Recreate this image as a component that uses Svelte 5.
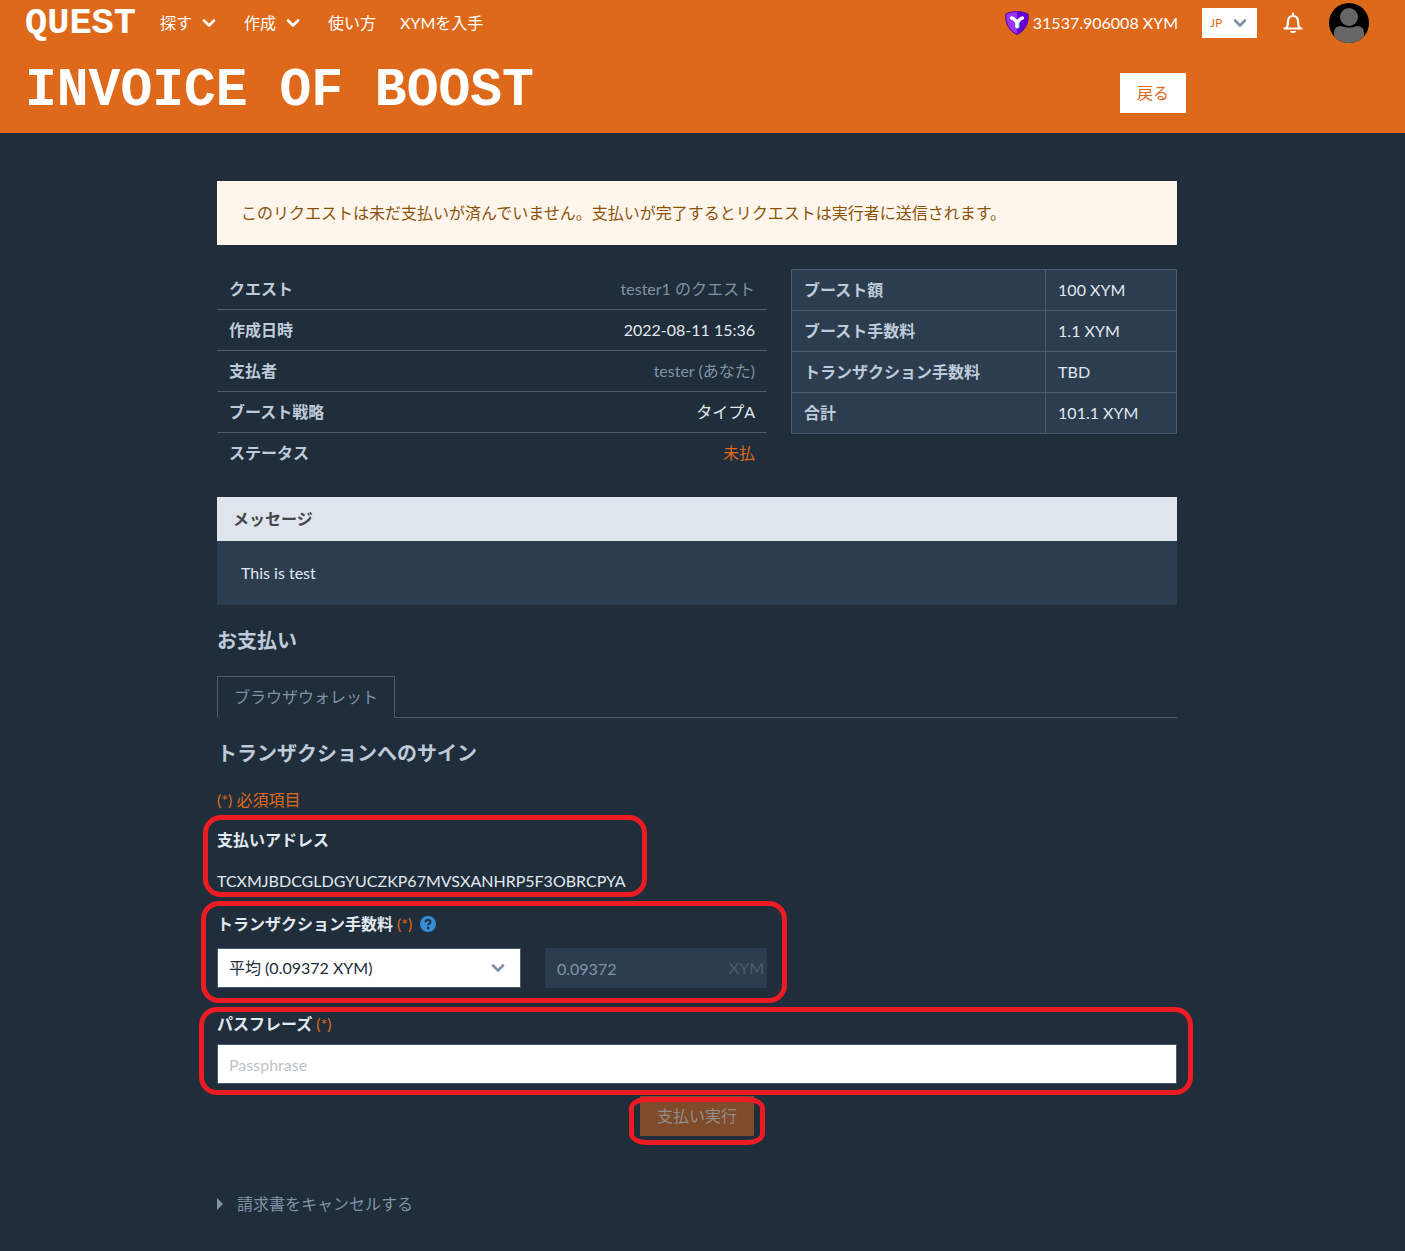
<script>
  const details = [
    { label: 'クエスト', value: 'tester1 のクエスト', kind: 'link' },
    { label: '作成日時', value: '2022-08-11 15:36', kind: 'plain' },
    { label: '支払者', value: 'tester (あなた)', kind: 'link' },
    { label: 'ブースト戦略', value: 'タイプA', kind: 'plain' },
    { label: 'ステータス', value: '未払', kind: 'status' }
  ];
  const amounts = [
    ['ブースト額', '100 XYM'],
    ['ブースト手数料', '1.1 XYM'],
    ['トランザクション手数料', 'TBD'],
    ['合計', '101.1 XYM']
  ];
</script>

{#snippet chevron()}
  <svg class="chevron" viewBox="0 0 14 10" aria-hidden="true">
    <path d="M2 2.500l5 5 5-5" fill="none" stroke="currentColor" stroke-width="2.600" stroke-linecap="round" stroke-linejoin="round" />
  </svg>
{/snippet}

<div class="page">
  <header>
    <nav>
      <a class="logo" href="#home">QUEST</a>
      <button type="button" class="menu">探す{@render chevron()}</button>
      <button type="button" class="menu">作成{@render chevron()}</button>
      <a href="#howto">使い方</a>
      <a href="#get">XYMを入手</a>
      <div class="account">
        <span class="balance">
          <svg viewBox="0 0 24 24" width="24" height="24" aria-hidden="true">
            <path d="M12 0.5C8 0.5 3.500 1.500 0.800 3.200C0 12 4 20 12 23.500C20 20 24 12 23.200 3.200C20.500 1.500 16 0.500 12 0.500Z" fill="#6600d4" stroke="#5208a5" stroke-width="1" />
            <path d="M12 1C8 1 4 2 1.300 3.600C0.800 12 4.500 19.500 12 23Z" fill="#9a35f0" />
            <path d="M12.500 11v4.500" fill="none" stroke="#4aa5b8" stroke-width="4.600" stroke-linecap="round" />
            <path d="M6.500 7c3.500 0 3 3.500 5.500 3.500s2.500-3.500 5.500-3.500M12 10.500v5" fill="none" stroke="#fff" stroke-width="3.400" stroke-linecap="round" stroke-linejoin="round" />
          </svg>
          31537.906008 XYM
        </span>
        <span class="lang">
          <select aria-label="言語"><option>JP</option></select>
          {@render chevron()}
        </span>
        <button type="button" class="bell" aria-label="通知">
          <svg viewBox="0 0 20 22" width="20" height="22" aria-hidden="true">
            <path d="M1.500 16.500h17M3 16.500c2-2 2-4 2-7C5 6 7 4 10 4s5 2 5 5.500c0 3 0 5 2 7M10 4V1.500" fill="none" stroke="#fff" stroke-width="2.200" stroke-linecap="round" />
            <path d="M7 19h6c-.5 3-5.500 3-6 0z" fill="#fff" />
          </svg>
        </button>
        <svg class="avatar" viewBox="0 0 40 40" aria-label="プロフィール" role="img">
          <defs><clipPath id="round"><circle cx="20" cy="20" r="20" /></clipPath></defs>
          <g clip-path="url(#round)">
            <rect width="40" height="40" fill="#000" />
            <circle cx="20" cy="14" r="9" fill="#666" />
            <path d="M5 40V30q0-7 7-7q8 3 16 0q7 0 7 7v10z" fill="#666" />
          </g>
        </svg>
      </div>
    </nav>
    <div class="hero">
      <h1>INVOICE OF BOOST</h1>
      <div><button type="button" class="back">戻る</button></div>
    </div>
  </header>

  <main>
    <p class="notice">このリクエストは未だ支払いが済んでいません。支払いが完了するとリクエストは実行者に送信されます。</p>

    <div class="columns">
      <table class="details">
        <tbody>
          {#each details as row}
            <tr><th scope="row">{row.label}</th><td class={row.kind}>{#if row.kind === 'link'}<a href="#detail">{row.value}</a>{:else}{row.value}{/if}</td></tr>
          {/each}
        </tbody>
      </table>
      <table class="amounts">
        <tbody>
          {#each amounts as [label, value]}
            <tr><th scope="row">{label}</th><td>{value}</td></tr>
          {/each}
        </tbody>
      </table>
    </div>

    <section class="message">
      <h2>メッセージ</h2>
      <p>This is test</p>
    </section>

    <h2 class="title">お支払い</h2>
    <div class="tabs"><a href="#wallet">ブラウザウォレット</a></div>
    <h2 class="title">トランザクションへのサイン</h2>
    <p class="required">(*) 必須項目</p>

    <form>
      <div class="field address">
        <span class="label">支払いアドレス</span>
        <p>TCXMJBDCGLDGYUCZKP67MVSXANHRP5F3OBRCPYA</p>
        <span class="mark mark-address"></span>
      </div>
      <div class="field fee">
        <label class="label" for="fee">トランザクション手数料 <em>(*)</em>
          <svg viewBox="0 0 16 16" width="16" height="16" aria-hidden="true">
            <circle cx="8" cy="8" r="8" fill="#368fd6" />
            <path d="M5.600 6.200c0-3.300 4.900-3.200 4.900-.4 0 1.600-2.300 1.700-2.300 3.400" fill="none" stroke="#202d3a" stroke-width="2" />
            <circle cx="8.200" cy="12" r="1.300" fill="#202d3a" />
          </svg>
        </label>
        <div class="columns">
          <span class="select">
            <select id="fee"><option>平均 (0.09372 XYM)</option></select>
            {@render chevron()}
          </span>
          <span class="amount">
            <input aria-label="手数料" value="0.09372" disabled />
            <span class="unit">XYM</span>
          </span>
        </div>
        <span class="mark mark-fee"></span>
      </div>
      <div class="field pass">
        <label class="label" for="pass">パスフレーズ <em>(*)</em></label>
        <input id="pass" placeholder="Passphrase" />
        <span class="mark mark-pass"></span>
      </div>
      <div class="submit">
        <button type="button" disabled>支払い実行</button>
        <span class="mark mark-submit"></span>
      </div>
    </form>

    <button type="button" class="cancel">
      <svg viewBox="0 0 6 12" width="6" height="12" aria-hidden="true"><path d="M0 0l6 6-6 6z" fill="currentColor" /></svg>
      請求書をキャンセルする
    </button>
  </main>
</div>

<style>
  :global(body) {
    background: #202d3a;
  }
  .page {
    min-height: 100vh;
    box-sizing: border-box;
    background: #202d3a;
    color: #e1e8f0;
    font: 16px/24px Lato, "Noto Sans CJK JP", sans-serif;
  }
  h1, h2, p {
    margin: 0;
  }
  button, input, select {
    box-sizing: border-box;
    margin: 0;
    border: 0;
    border-radius: 0;
    font: inherit;
  }
  a {
    color: inherit;
    text-decoration: none;
  }
  em {
    font-style: normal;
    font-weight: 400;
    color: #de691b;
  }
  .chevron {
    width: 14px;
    height: 10px;
    flex: none;
  }
  header {
    background: #de691b;
    color: #fff;
    padding: 0 36px 20px 25px;
  }
  nav {
    display: flex;
    align-items: center;
    gap: 24px;
    height: 46px;
  }
  .logo {
    font: bold 37px/40px "Liberation Mono", monospace;
  }
  .menu {
    display: flex;
    align-items: center;
    gap: 10px;
    padding: 0 4px 0 0;
    background: none;
    color: #fff;
  }
  .account {
    display: flex;
    align-items: center;
    gap: 24px;
    margin-left: auto;
  }
  .balance {
    display: flex;
    align-items: center;
    gap: 4px;
  }
  .lang, .select {
    position: relative;
    display: flex;
    align-items: center;
  }
  .lang .chevron, .select .chevron {
    position: absolute;
    right: 10px;
    color: #8292a6;
    pointer-events: none;
  }
  .lang select, .select select {
    appearance: none;
    background: #fff;
  }
  .lang select {
    width: 55px;
    height: 30px;
    padding: 0 8px;
    font-size: 12px;
    color: #de691b;
  }
  .bell {
    display: flex;
    padding: 0 2px;
    background: none;
  }
  .avatar {
    width: 40px;
    height: 40px;
  }
  .hero {
    display: grid;
    grid-template-columns: 22fr 5fr;
    padding-top: 27px;
  }
  h1 {
    font: bold 53px/36px "Liberation Mono", monospace;
    white-space: nowrap;
  }
  .back {
    display: block;
    height: 40px;
    padding: 0 17px;
    background: #fff;
    color: #de691b;
  }
  main {
    max-width: 960px;
    margin: 0 auto;
    padding: 48px 24px 32px 13px;
  }
  .notice {
    padding: 20px 24px;
    background: #fef6ec;
    color: #8c5208;
  }
  .columns {
    display: grid;
    grid-template-columns: repeat(12, 1fr);
    column-gap: 24px;
    align-items: start;
  }
  .notice + .columns {
    margin-top: 24px;
  }
  table {
    border-collapse: collapse;
  }
  th, td {
    padding: 8px 12px;
    border: 0 solid #4c5c6d;
  }
  th {
    text-align: left;
    color: #becad9;
  }
  .details {
    grid-column: span 7;
  }
  .details td {
    text-align: right;
  }
  .details tr:not(:last-child) > * {
    border-bottom-width: 1px;
  }
  .details .link {
    color: #8292a6;
  }
  .details .status {
    color: #de691b;
  }
  .amounts {
    grid-column: span 5;
    background: #2c3d4f;
  }
  .amounts th, .amounts td {
    border-width: 1px;
  }
  .amounts th {
    width: 66%;
    box-sizing: border-box;
  }
  .message {
    margin-top: 24px;
    background: #2c3d4f;
  }
  .message h2 {
    padding: 10px 16px;
    background: #dee5ed;
    color: #454545;
    font-size: 16px;
    line-height: 24px;
  }
  .message p {
    padding: 20px 24px;
  }
  .title {
    padding-top: 24px;
    color: #becad9;
    font-size: 20px;
    line-height: 23px;
  }
  .tabs {
    display: flex;
    margin-top: 24px;
    border-bottom: 1px solid #4c5c6d;
  }
  .tabs a {
    margin-bottom: -1px;
    padding: 8px 16px;
    border: 1px solid #4c5c6d;
    border-bottom-color: #202d3a;
    color: #8292a6;
  }
  .required {
    margin-top: 23px;
    color: #de691b;
  }
  .field {
    position: relative;
  }
  .label {
    display: flex;
    align-items: center;
    gap: 4px;
    font-weight: 700;
  }
  .label svg {
    margin-left: 4px;
  }
  .address {
    padding-top: 16px;
  }
  .address p {
    padding-top: 17px;
  }
  .fee {
    padding-top: 19px;
  }
  .fee .columns {
    margin-top: 12px;
  }
  .select {
    grid-column: span 4;
  }
  .select select, .field input {
    width: 100%;
    height: 40px;
    padding: 0 11px;
    border: 1px solid #4c5c6d;
    color: #202d3a;
  }
  .select .chevron {
    right: 16px;
  }
  .amount {
    position: relative;
    grid-column: span 3;
    display: flex;
  }
  .field .amount input {
    background: #2c3d4f;
    border-color: #2c3d4f;
    color: #8292a6;
  }
  .unit {
    position: absolute;
    top: 8px;
    right: 3px;
    color: #4c5c6d;
  }
  .pass {
    padding-top: 24px;
  }
  .pass input {
    display: block;
    margin-top: 8px;
  }
  .pass input::placeholder {
    color: #bcc2c9;
    opacity: 1;
  }
  .submit {
    position: relative;
    width: max-content;
    margin: 12px auto 0;
  }
  .submit button {
    display: block;
    height: 40px;
    padding: 0 17px;
    background: #7f4b2b;
    color: #918e8d;
  }
  .mark {
    position: absolute;
    box-sizing: border-box;
    border: 5px solid #ed1c24;
    border-radius: 18px;
    pointer-events: none;
  }
  .mark-address {
    top: 3px;
    left: -14px;
    width: 444px;
    height: 82px;
  }
  .mark-fee {
    top: 8px;
    left: -16px;
    width: 586px;
    height: 102px;
  }
  .mark-pass {
    inset: 19px -16px -11px -18px;
  }
  .mark-submit {
    inset: 1px -11px -9px;
    border-radius: 18px / 11px;
  }
  .cancel {
    display: flex;
    align-items: center;
    gap: 14px;
    margin-top: 56px;
    padding: 0;
    background: none;
    color: #8292a6;
  }
</style>
